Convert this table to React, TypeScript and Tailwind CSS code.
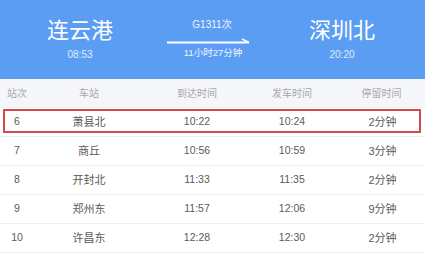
import React from "react";

const rows = [
  { no: "6", st: "萧县北", arr: "10:22", dep: "10:24", stay: "2分钟" },
  { no: "7", st: "商丘", arr: "10:56", dep: "10:59", stay: "3分钟" },
  { no: "8", st: "开封北", arr: "11:33", dep: "11:35", stay: "2分钟" },
  { no: "9", st: "郑州东", arr: "11:57", dep: "12:06", stay: "9分钟" },
  { no: "10", st: "许昌东", arr: "12:28", dep: "12:30", stay: "2分钟" },
];

const font = { fontFamily: '"Liberation Sans", "Noto Sans CJK SC", sans-serif' };

export default function App() {
  return (
    <div className="relative w-[425px] h-[257px] bg-white overflow-hidden" style={font}>
      <div className="h-[79px] bg-[#5c9df4] grid grid-cols-[160px_100px_1fr] text-white">
        <div className="flex flex-col items-center pt-[20px]">
          <div className="text-[22px] leading-[22px]">连云港</div>
          <div className="mt-[7px] text-[10px] leading-[12px] text-white/80">08:53</div>
        </div>
        <div className="flex flex-col items-center pt-[19px]">
          <div className="text-[10px] leading-[12px] text-white/90 pl-[4px]">G1311次</div>
          <svg width="84" height="10" viewBox="0 0 84 10" className="mt-[6px] -ml-[2px]">
            <line x1="0" y1="5.5" x2="82" y2="5.5" stroke="white" strokeWidth="2" />
            <line x1="82" y1="5.5" x2="75" y2="2" stroke="white" strokeWidth="1.5" />
          </svg>
          <div className="text-[9.5px] leading-[12px] text-white/90 pl-[6px]">11小时27分钟</div>
        </div>
        <div className="flex flex-col items-center pt-[20px] pr-[1px]">
          <div className="text-[22px] leading-[22px]">深圳北</div>
          <div className="mt-[7px] text-[10px] leading-[12px] text-white/80">20:20</div>
        </div>
      </div>
      <div className="grid grid-cols-[34px_110px_106px_84px_1fr] h-[29px] items-center bg-[#f4f6f9] text-[10px] text-[#a8a8a8] border-b border-[#eceef1]">
        <div className="text-center">站次</div>
        <div className="text-center">车站</div>
        <div className="text-center">到达时间</div>
        <div className="text-center">发车时间</div>
        <div className="text-center pl-[4px]">停留时间</div>
      </div>
      {rows.map((r) => (
        <div
          key={r.no}
          className="grid grid-cols-[34px_110px_106px_84px_1fr] h-[29px] items-center text-[#5a5a5a] border-b border-[#f0f0f0]"
        >
          <div className="text-center text-[10.5px]">{r.no}</div>
          <div className="text-center text-[11px]">{r.st}</div>
          <div className="text-center text-[10.5px]">{r.arr}</div>
          <div className="text-center text-[10.5px]">{r.dep}</div>
          <div className="text-center text-[11px] pl-[6px]">{r.stay}</div>
        </div>
      ))}
      <div className="absolute left-[3px] top-[109px] w-[418px] h-[24px] border-2 border-[#d4494e] pointer-events-none" />
    </div>
  );
}
